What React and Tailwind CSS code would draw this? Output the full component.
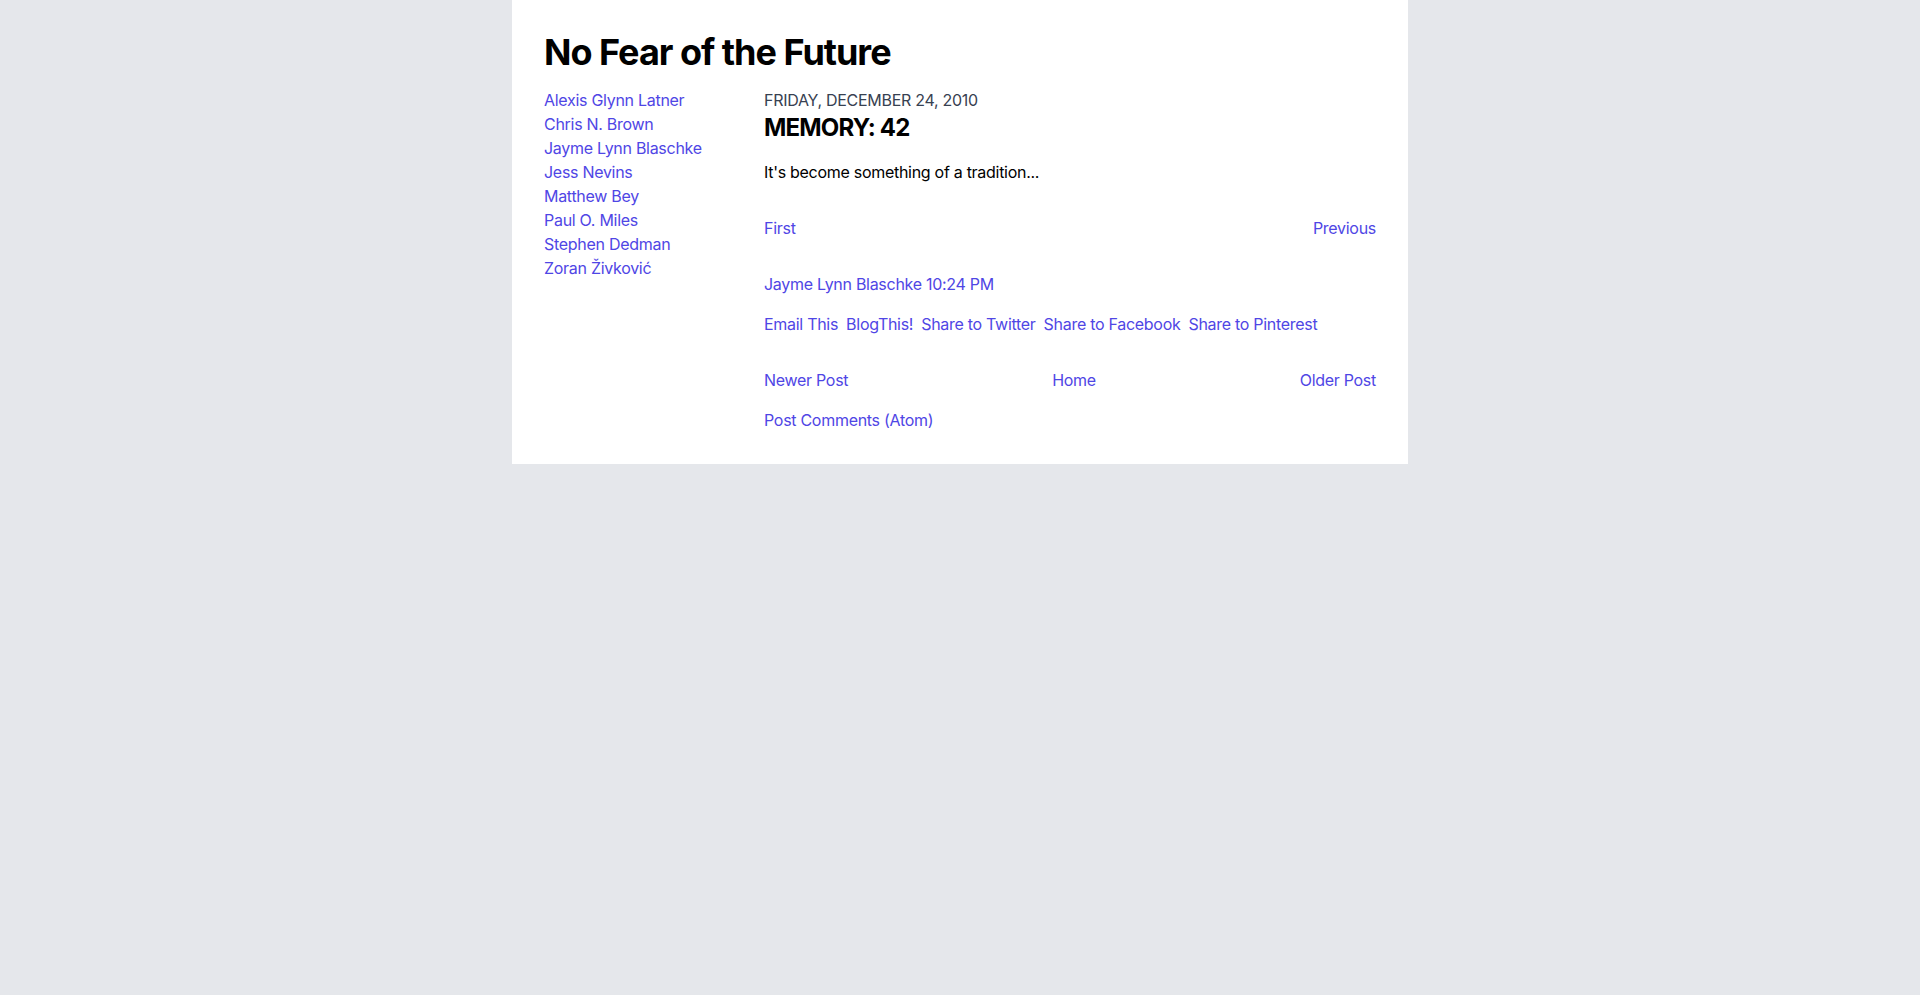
export default function App() {
  const authors = [
    "Alexis Glynn Latner",
    "Chris N. Brown",
    "Jayme Lynn Blaschke",
    "Jess Nevins",
    "Matthew Bey",
    "Paul O. Miles",
    "Stephen Dedman",
    "Zoran Živković",
  ];
  const shares = ["Email This", "BlogThis!", "Share to Twitter", "Share to Facebook", "Share to Pinterest"];
  return (
    <div className="min-h-screen bg-[#e5e7eb] font-['Inter',sans-serif] text-black tracking-[-0.018em]">
      <div className="mx-auto max-w-4xl bg-white p-8">
        <h1 className="mb-4 text-4xl font-bold leading-10 tracking-[-0.028em]">No Fear of the Future</h1>
        <div className="grid grid-cols-4 gap-12">
          <ul className="col-span-1 flex flex-col text-base leading-6">
            {authors.map((a) => (
              <li key={a}>
                <a href="#" className="text-[#4f46e5]">{a}</a>
              </li>
            ))}
          </ul>
          <div className="col-span-3 text-base leading-6">
            <div className="uppercase text-[#374151]">Friday, December 24, 2010</div>
            <h2 className="text-2xl font-bold leading-8 tracking-[-0.035em]">MEMORY: 42</h2>
            <p className="mt-4">It's become something of a tradition...</p>
            <div className="mt-8 flex justify-between">
              <a href="#" className="text-[#4f46e5]">First</a>
              <a href="#" className="text-[#4f46e5]">Previous</a>
            </div>
            <div className="mt-8">
              <a href="#" className="text-[#4f46e5]">Jayme Lynn Blaschke</a>{" "}
              <a href="#" className="text-[#4f46e5]">10:24 PM</a>
            </div>
            <div className="mt-4 flex gap-2">
              {shares.map((s) => (
                <a key={s} href="#" className="text-[#4f46e5]">{s}</a>
              ))}
            </div>
            <div className="mt-8 flex justify-between">
              <a href="#" className="text-[#4f46e5]">Newer Post</a>
              <a href="#" className="text-[#4f46e5]">Home</a>
              <a href="#" className="text-[#4f46e5]">Older Post</a>
            </div>
            <div className="mt-4">
              <a href="#" className="text-[#4f46e5]">Post Comments (Atom)</a>
            </div>
          </div>
        </div>
      </div>
    </div>
  );
}
